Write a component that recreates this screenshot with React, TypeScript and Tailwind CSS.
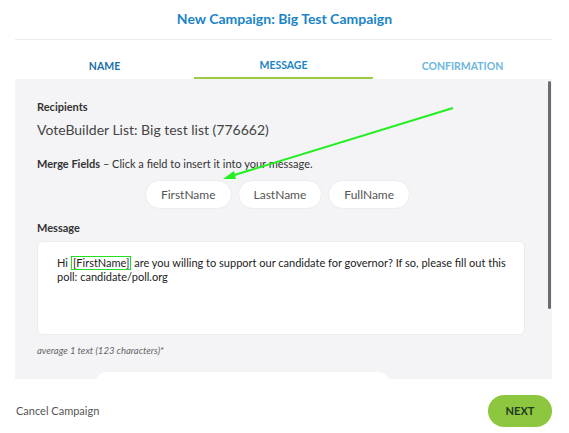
import React from "react"

const font = { fontFamily: "Lato, 'Open Sans', sans-serif" }

const Pill = ({ label }: { label: string }) => (
    <button className="h-[29px] rounded-full border border-[#ececef] bg-white px-[15px] text-[12px] text-[#555]">
        {label}
    </button>
)

export default function App() {
    return (
        <div style={font} className="relative h-[433px] w-[569px] overflow-hidden bg-white">
            <h1 className="pt-[9px] text-center text-[14px] leading-[20px] font-bold text-[#1a84c7]">New Campaign: Big Test Campaign</h1>
            <div className="ml-[15px] mr-[17px] mt-[10px] border-t border-[#ececec]" />

            <div className="ml-[15px] mr-[17px] mt-[15px] grid grid-cols-3 text-[10.5px] leading-[15px] font-bold uppercase">
                <div className="pt-[4px] text-center text-[#1a6fa8]">Name</div>
                <div className="border-b-2 border-[#9ccc44] pt-[3px] pb-[4px] text-center text-[#1a84c7]">Message</div>
                <div className="pt-[4px] text-center text-[#6db6de]">Confirmation</div>
            </div>

            <div className="relative ml-[15px] mr-[17px] h-[300px] overflow-hidden bg-[#f4f4f6]">
                <div className="absolute right-[1px] top-[2px] h-[228px] w-[3px] rounded bg-[#6b6b70]" />
                <div className="px-[22px] pt-[20px]">
                    <div className="text-[11px] leading-[16px] font-bold text-[#333]">Recipients</div>
                    <div className="mt-[5px] text-[14px] leading-[20px] text-[#444]">VoteBuilder List: Big test list (776662)</div>
                    <div className="mt-[16px] text-[11px] leading-[16px] text-[#333]">
                        <span className="font-bold">Merge Fields</span> – Click a field to insert it into your message.
                    </div>
                    <div className="mt-[8px] flex justify-center gap-[6px] pr-[12px]">
                        <Pill label="FirstName" />
                        <Pill label="LastName" />
                        <Pill label="FullName" />
                    </div>
                    <div className="mt-[11px] text-[11px] leading-[16px] font-bold text-[#333]">Message</div>
                    <div className="mr-[5px] mt-[5px] h-[94px] rounded-md border border-[#ececef] bg-white pl-[19px] pr-[8px] pt-[14px] text-[11px] leading-[14px] text-[#222]">
                        Hi<span className="ml-[3px] inline-block border-[1.5px] border-[#22e022] px-[1px] leading-[12px]">[FirstName]</span> are you willing to support our candidate for governor? If so, please fill out this poll: candidate/poll.org
                    </div>
                    <div className="mt-[9px] text-[9.5px] leading-[14px] italic text-[#666]">average 1 text (123 characters)*</div>
                    <div className="ml-[58px] mt-[14px] h-[20px] w-[295px] rounded-t-xl bg-white" />
                </div>
            </div>

            <div className="ml-[16px] mr-[17px] mt-[16px] flex items-center justify-between">
                <span className="text-[11px] text-[#555]">Cancel Campaign</span>
                <button className="h-[32px] w-[64px] rounded-full bg-[#8dc63f] text-[11px] font-bold text-[#1f3a1f]">NEXT</button>
            </div>

            <svg className="pointer-events-none absolute left-0 top-0" width="569" height="433">
                <line x1="453" y1="108" x2="231" y2="176" stroke="#22ee22" strokeWidth="2" />
                <polygon points="223,179 234,171 236,179" fill="#22ee22" />
            </svg>
        </div>
    )
}
